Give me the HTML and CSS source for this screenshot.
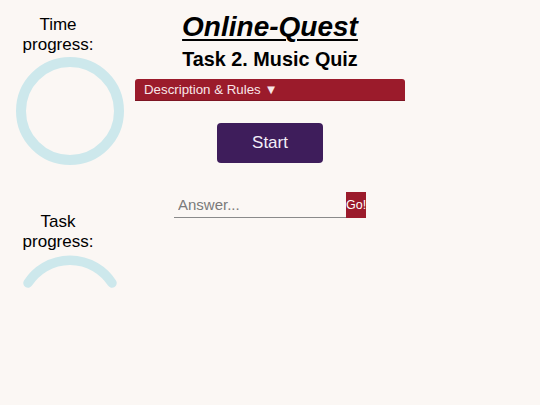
FILE: index.html
```html
<!DOCTYPE html>
<html>
<head>
<meta charset="utf-8">
<link rel="stylesheet" href="styles.css">
</head>
<body>
<div class="page">
  <aside class="sidebar">
    <div class="label time-label">Time<br>progress:</div>
    <svg class="ring" width="108" height="108" viewBox="0 0 108 108">
      <circle cx="54" cy="54" r="49" fill="none" stroke="#cde8ec" stroke-width="10"/>
    </svg>
    <div class="label task-label">Task<br>progress:</div>
    <svg class="arc" width="100" height="40" viewBox="0 0 100 40">
      <path d="M 8 30 A 50 50 0 0 1 92 30" fill="none" stroke="#cde8ec" stroke-width="9.5" stroke-linecap="round"/>
    </svg>
  </aside>
  <main class="main">
    <h1 class="title">Online-Quest</h1>
    <h2 class="subtitle">Task 2. Music Quiz</h2>
    <div class="rules">Description &amp; Rules ▼</div>
    <button class="start">Start</button>
    <form class="answer">
      <input class="answer-input" type="text" placeholder="Answer...">
      <button class="go" type="button">Go!</button>
    </form>
  </main>
</div>
</body>
</html>
```

FILE: styles.css
```css
html, body {
  margin: 0;
  padding: 0;
  background: #fbf7f4;
  font-family: "Liberation Sans", Arial, sans-serif;
  color: #000;
}
.page {
  display: grid;
  grid-template-columns: 135px 270px;
  width: 540px;
  height: 405px;
}
.sidebar {
  display: flex;
  flex-direction: column;
  align-items: center;
  padding-left: 4px;
}
.label {
  align-self: flex-start;
  width: 108px;
  font-size: 17px;
  line-height: 20px;
  text-align: center;
}
.time-label {
  margin-top: 15px;
}
.ring {
  display: block;
  margin-top: 2px;
}
.task-label {
  margin-top: 47px;
}
.arc {
  display: block;
  margin-top: 1px;
}
.main {
  display: flex;
  flex-direction: column;
  align-items: center;
}
.title {
  margin: 11px 0 0 0;
  font-size: 28px;
  line-height: 32px;
  font-weight: bold;
  font-style: italic;
  text-decoration: underline;
  text-decoration-thickness: 2px;
  text-underline-offset: 3px;
}
.subtitle {
  margin: 5px 0 0 0;
  font-size: 19.8px;
  line-height: 22px;
  font-weight: bold;
}
.rules {
  align-self: stretch;
  margin-top: 9px;
  height: 22px;
  box-sizing: border-box;
  background: #9b1b2b;
  border-radius: 3px 3px 0 0;
  border-bottom: 1px solid #7d1523;
  color: #f8e6e8;
  font-size: 13.3px;
  line-height: 21px;
  padding-left: 9px;
}
.start {
  margin-top: 22px;
  width: 106px;
  height: 40px;
  background: #3e1d5b;
  color: #f3eef8;
  border: none;
  border-radius: 4px;
  font-family: "Liberation Sans", Arial, sans-serif;
  font-size: 17px;
  padding: 0;
}
.answer {
  display: flex;
  margin: 29px 0 0 0;
  height: 26px;
}
.answer-input {
  width: 172px;
  height: 26px;
  box-sizing: border-box;
  border: none;
  border-bottom: 1px solid #8a8a8a;
  background: transparent;
  font-family: "Liberation Sans", Arial, sans-serif;
  font-size: 15px;
  padding: 0 0 0 4px;
  outline: none;
}
.answer-input::placeholder {
  color: #7a7a7a;
}
.go {
  width: 20px;
  height: 26px;
  background: #9b1b2b;
  color: #fff;
  border: none;
  padding: 0;
  font-family: "Liberation Sans", Arial, sans-serif;
  font-size: 12.5px;
  border-radius: 0;
}
```
